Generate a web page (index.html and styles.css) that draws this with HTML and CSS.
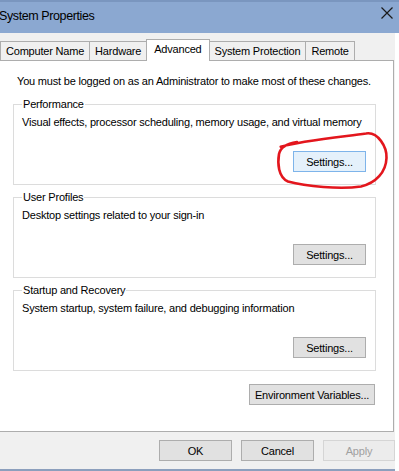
FILE: index.html
```html
<!DOCTYPE html>
<html lang="en">
<head>
  <meta charset="UTF-8">
  <meta name="viewport" content="width=device-width, initial-scale=1.0">
  <title>System Properties</title>
  <link rel="stylesheet" href="styles.css">
</head>
<body>
  <div class="window">
    <div class="titlebar">
      <span class="title">System Properties</span>
      <svg class="close" width="12" height="12" viewBox="0 0 12 12">
        <path d="M0.5 0.5 L11.5 11.5 M11.5 0.5 L0.5 11.5" stroke="#1b1b1b" stroke-width="1.2" fill="none" />
      </svg>
    </div>

    <div class="dialog">
      <div class="tabs">
        <div class="tab">Computer Name</div>
        <div class="tab">Hardware</div>
        <div class="tab active">Advanced</div>
        <div class="tab">System Protection</div>
        <div class="tab">Remote</div>
      </div>

      <div class="panel">
        <p class="note">You must be logged on as an Administrator to make most of these changes.</p>

        <fieldset class="group">
          <legend>Performance</legend>
          <p>Visual effects, processor scheduling, memory usage, and virtual memory</p>
          <div class="actions">
            <span class="marked">
              <button class="btn focused">Settings...</button>
              <!-- hand-drawn circle around the button -->
              <svg class="scribble" width="125" height="66" viewBox="0 0 125 66">
                <path d="M10.7 18.7 C30 13, 70 9, 96 5.5 C108 3.5, 117 19, 116.5 30 C116 44, 106 55, 91 58.5 C70 61.5, 36 58.5, 18 53.5 C8 49, 7.5 35, 9 26 C10.5 19, 17 15.5, 27 14"
                      stroke="#e3161d" stroke-width="2.6" fill="none" stroke-linecap="round" />
              </svg>
            </span>
          </div>
        </fieldset>

        <fieldset class="group">
          <legend>User Profiles</legend>
          <p>Desktop settings related to your sign-in</p>
          <div class="actions">
            <button class="btn">Settings...</button>
          </div>
        </fieldset>

        <fieldset class="group">
          <legend>Startup and Recovery</legend>
          <p>System startup, system failure, and debugging information</p>
          <div class="actions">
            <button class="btn">Settings...</button>
          </div>
        </fieldset>

        <div class="env-row">
          <button class="btn env">Environment Variables...</button>
        </div>
      </div>

      <div class="footer">
        <button class="btn">OK</button>
        <button class="btn">Cancel</button>
        <button class="btn apply" disabled>Apply</button>
      </div>
    </div>
  </div>
</body>
</html>
```

FILE: styles.css
```css
body {
  margin: 0;
  background: #ffffff;
  font-family: "Liberation Sans", Arial, sans-serif;
  font-size: 11px;
  letter-spacing: -0.2px;
  color: #000;
}

.window {
  width: 399px;
}

.titlebar {
  height: 33px;
  box-sizing: border-box;
  border-top: 2px solid #7a96bf;
  background: #8ba8d1;
  display: flex;
  justify-content: space-between;
  align-items: flex-start;
  padding: 7px 6px 0 0;
}

.title {
  font-size: 12.5px;
  line-height: 15px;
  letter-spacing: -0.4px;
  margin-left: -1px;
}

.close {
  margin-top: -2px;
}

.dialog {
  width: 395px;
  background: #f0f0f0;
}

/* tabs */
.tabs {
  display: flex;
  align-items: flex-end;
  padding-top: 6px;
}

.tab {
  height: 19px;
  box-sizing: border-box;
  padding: 3px 5px 2px;
  line-height: 13px;
  border: 1px solid #adadad;
  border-bottom: none;
  background: #f0f0f0;
  white-space: nowrap;
}

.tab + .tab {
  margin-left: -1px;
}

.tab.active {
  position: relative;
  z-index: 1;
  height: 22px;
  padding: 3px 7px 5px;
  margin-bottom: -1px;
  background: #ffffff;
}

/* tab page */
.panel {
  height: 372px;
  box-sizing: border-box;
  margin: 0 1px 0 -1px;
  padding: 14px 17px 0 13px;
  border: 1px solid #adadad;
  background: #ffffff;
}

.note {
  margin: 0;
  padding-left: 4px;
  line-height: 13px;
}

.group {
  margin: 10px 0 0;
  padding: 5px 9px 12px 8px;
  border: 1px solid #dcdcdc;
  min-inline-size: 0;
}

.group + .group {
  margin-top: 6px;
}

.group legend {
  padding: 0 1px;
  line-height: 13px;
}

.group p {
  margin: 0;
  line-height: 13px;
  white-space: nowrap;
}

.actions {
  display: flex;
  justify-content: flex-end;
  margin-top: 22px;
}

.marked {
  position: relative;
  display: flex;
}

.scribble {
  position: absolute;
  left: -23px;
  top: -23px;
  pointer-events: none;
}

.env-row {
  display: flex;
  justify-content: flex-end;
  margin-top: 13px;
  padding-right: 1px;
}

/* buttons */
.btn {
  width: 73px;
  height: 21px;
  padding: 0;
  border: 1px solid #adadad;
  background: #e1e1e1;
  font-family: inherit;
  font-size: 11px;
  letter-spacing: -0.2px;
  color: #000;
}

.btn.focused {
  border-color: #7eb4ea;
  background: #e5f1fb;
}

.btn.env {
  width: 126px;
}

.btn.apply {
  width: 72px;
  border-color: #d5d5d5;
  background: #ececec;
  color: #a0a0a0;
}

.footer {
  height: 39px;
  box-sizing: border-box;
  display: flex;
  justify-content: flex-end;
  gap: 9px;
  padding-top: 8px;
  border-bottom: 2px solid #8c9fbd;
}
```
